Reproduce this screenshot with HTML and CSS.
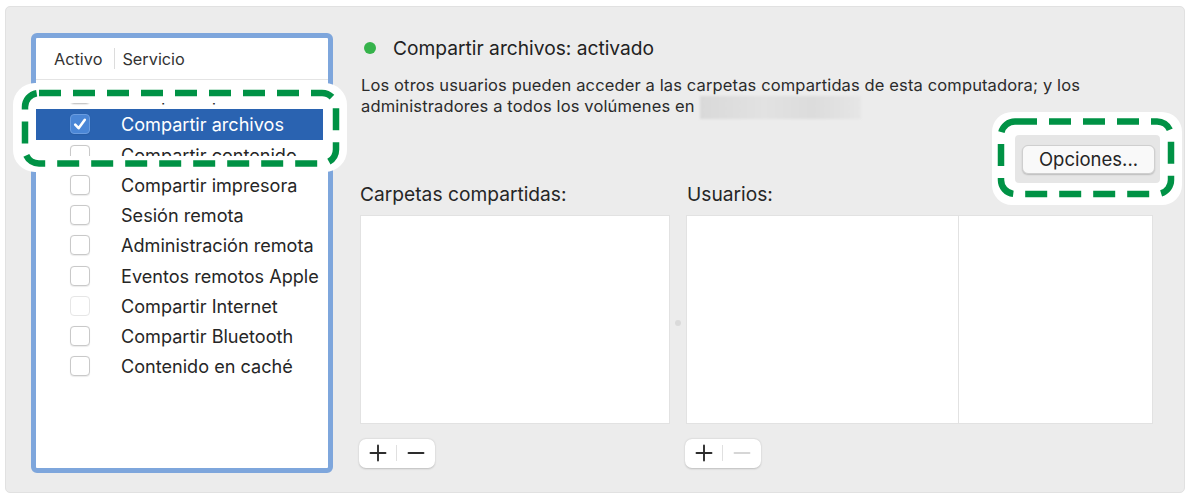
FILE: index.html
```html
<!DOCTYPE html>
<html lang="es">
<head>
<meta charset="utf-8">
<title>Compartir</title>
<link rel="stylesheet" href="styles.css">
</head>
<body>
<div class="page">
  <div class="panel">
    <div class="services">
      <div class="services-head">
        <span class="col-active">Activo</span>
        <span class="col-sep"></span>
        <span class="col-service">Servicio</span>
      </div>
      <div class="services-body">
        <div class="row"><span class="cb"></span><span class="label">Compartir pantalla</span></div>
        <div class="row selected"><span class="cb checked"><svg viewBox="0 0 20 20" width="20" height="20"><path d="M5.2 10.6 L8.6 14.2 L14.8 5.8" fill="none" stroke="#fff" stroke-width="2.6" stroke-linecap="round" stroke-linejoin="round"/></svg></span><span class="label">Compartir archivos</span></div>
        <div class="row"><span class="cb"></span><span class="label">Compartir contenido</span></div>
        <div class="row"><span class="cb"></span><span class="label">Compartir impresora</span></div>
        <div class="row"><span class="cb"></span><span class="label">Sesión remota</span></div>
        <div class="row"><span class="cb"></span><span class="label">Administración remota</span></div>
        <div class="row"><span class="cb"></span><span class="label">Eventos remotos Apple</span></div>
        <div class="row"><span class="cb disabled"></span><span class="label">Compartir Internet</span></div>
        <div class="row"><span class="cb"></span><span class="label">Compartir Bluetooth</span></div>
        <div class="row"><span class="cb"></span><span class="label">Contenido en caché</span></div>
      </div>
    </div>

    <div class="detail">
      <div class="status">
        <span class="dot"></span>
        <span class="status-text">Compartir archivos: activado</span>
      </div>
      <p class="desc">Los otros usuarios pueden acceder a las carpetas compartidas de esta computadora; y los<br>administradores a todos los volúmenes en <span class="redacted"></span></p>
      <div class="options-row">
        <button class="btn">Opciones...</button>
      </div>
      <div class="lists">
        <div class="list-label">Carpetas compartidas:</div>
        <div></div>
        <div class="list-label users-label">Usuarios:</div>

        <div class="box"></div>
        <div class="splitter"><span class="grip"></span></div>
        <div class="box users"><div class="users-col"></div><div></div></div>

        <div class="pm">
          <span class="pm-btn"><svg viewBox="0 0 18 18" width="18" height="18"><path d="M9 1.5 V16.5 M1.5 9 H16.5" stroke="#2d2d2d" stroke-width="1.9" stroke-linecap="round"/></svg></span>
          <span class="pm-sep"></span>
          <span class="pm-btn"><svg viewBox="0 0 18 18" width="18" height="18"><path d="M1.5 9 H16.5" stroke="#2d2d2d" stroke-width="1.9" stroke-linecap="round"/></svg></span>
        </div>
        <div></div>
        <div class="pm">
          <span class="pm-btn"><svg viewBox="0 0 18 18" width="18" height="18"><path d="M9 1.5 V16.5 M1.5 9 H16.5" stroke="#2d2d2d" stroke-width="1.9" stroke-linecap="round"/></svg></span>
          <span class="pm-sep"></span>
          <span class="pm-btn"><svg viewBox="0 0 18 18" width="18" height="18"><path d="M1.5 9 H16.5" stroke="#d6d6d6" stroke-width="1.9" stroke-linecap="round"/></svg></span>
        </div>
      </div>
    </div>
  </div>

  <svg class="callouts" viewBox="0 0 1191 497" width="1191" height="497">
    <path fill="#ffffff" fill-rule="evenodd" d="M35,83 H325 A22 22 0 0 1 347,105 V150 A22 22 0 0 1 325,172 H35 A22 22 0 0 1 13,150 V105 A22 22 0 0 1 35,83 Z M39,103 H325 A3 3 0 0 1 328,106 V153 A3 3 0 0 1 325,156 H39 A3 3 0 0 1 36,153 V106 A3 3 0 0 1 39,103 Z"/>
    <rect x="25" y="93" width="311" height="70.5" rx="14" fill="none" stroke="#009245" stroke-width="6.5" stroke-dasharray="22 12"/>
    <path fill="#ffffff" fill-rule="evenodd" d="M1012,112 H1162 A20 20 0 0 1 1182,132 V185 A20 20 0 0 1 1162,205 H1012 A20 20 0 0 1 992,185 V132 A20 20 0 0 1 1012,112 Z M1019,135 H1156 A4 4 0 0 1 1160,139 V179 A4 4 0 0 1 1156,183 H1019 A4 4 0 0 1 1015,179 V139 A4 4 0 0 1 1019,135 Z"/>
    <rect x="1015" y="135" width="145" height="48" rx="4" fill="#000" fill-opacity="0.025"/>
    <rect x="1001" y="121.5" width="170" height="72.5" rx="14" fill="none" stroke="#009245" stroke-width="6.5" stroke-dasharray="22 12"/>
  </svg>
</div>
</body>
</html>
```

FILE: styles.css
```css
* { box-sizing: border-box; }

html, body {
  margin: 0;
  padding: 0;
  background: #ffffff;
}

body {
  font-family: "Inter", "Liberation Sans", Arial, sans-serif;
  color: #262626;
}

.page {
  position: relative;
  width: 1191px;
  height: 497px;
  padding: 6px 6px 4px 5px;
}

.panel {
  display: flex;
  width: 1180px;
  height: 487px;
  background: #ececec;
  border: 1px solid #e1e1e1;
  border-radius: 5px;
}

/* Services list */
.services {
  flex: none;
  width: 302px;
  height: 440px;
  margin: 26px 0 0 25px;
  border: 5px solid #7ea6dc;
  border-radius: 6px;
  background: #ffffff;
  overflow: hidden;
}

.services-head {
  display: flex;
  align-items: center;
  height: 42px;
  padding-left: 18px;
  border-bottom: 1px solid #e4e4e4;
  font-size: 16.3px;
  color: #333333;
}

.col-sep {
  width: 1px;
  height: 21px;
  background: #dcdcdc;
  margin: 0 7px 0 12px;
}

.services-body {
  margin-top: -1px;
}

.row {
  display: flex;
  align-items: center;
  height: 30.25px;
  margin-right: 5px;
  font-size: 18.1px;
  color: #262626;
}

.row.selected {
  background: #2a63b1;
  color: #ffffff;
}

.cb {
  flex: none;
  width: 20px;
  height: 20px;
  margin-left: 34px;
  margin-right: 31px;
  border: 1px solid #c9c9c9;
  border-radius: 4px;
  background: #ffffff;
  box-shadow: 0 0.5px 1px rgba(0, 0, 0, 0.08);
}

.cb.disabled {
  border-color: #e6e6e6;
  box-shadow: none;
}

.cb.checked {
  background: #4a86d6;
  border-color: #6a9ce0;
}

.cb.checked svg {
  display: block;
  margin: -1px;
}

/* Detail column */
.detail {
  flex: 1;
  display: flex;
  flex-direction: column;
  margin-left: 27px;
  padding: 30px 29px 0 0;
}

.status {
  display: flex;
  align-items: center;
  height: 22px;
}

.dot {
  width: 12px;
  height: 12px;
  margin-left: 4px;
  margin-right: 17px;
  border-radius: 50%;
  background: #36b34b;
}

.status-text {
  font-size: 19.2px;
  color: #222222;
}

.desc {
  margin: 15.5px 0 0 1px;
  font-size: 16.5px;
  letter-spacing: 0.13px;
  line-height: 21px;
  color: #2b2b2b;
  white-space: nowrap;
}

.redacted {
  display: inline-block;
  width: 161px;
  height: 23px;
  margin-left: 1px;
  vertical-align: -7px;
  background: linear-gradient(90deg, #d9d9d9, #e2e2e2 40%, #dcdcdc 70%, #e6e6e6);
  filter: blur(1px);
}

.options-row {
  display: flex;
  justify-content: flex-end;
  margin-top: 26px;
}

.btn {
  width: 133px;
  height: 29px;
  padding: 0;
  border: 0.5px solid #d4d4d4;
  border-radius: 6px;
  background: #ffffff;
  box-shadow: 0 1px 1.5px rgba(0, 0, 0, 0.18);
  font-family: inherit;
  font-size: 18.5px;
  color: #262626;
}

.lists {
  display: grid;
  grid-template-columns: 310px 16px 469px;
  grid-template-rows: 20px 209px 29px;
  row-gap: 11px;
  margin-top: 10px;
}

.list-label {
  font-size: 19.2px;
  line-height: 20px;
  color: #262626;
}

.users-label { margin-left: 1px; }

.box {
  background: #ffffff;
  border: 1px solid #e2e2e2;
}

.users {
  display: grid;
  grid-template-columns: 272px 1fr;
  width: 467px;
}

.users-col {
  border-right: 1px solid #e2e2e2;
}

.splitter {
  display: flex;
  align-items: center;
  justify-content: center;
}

.grip {
  width: 6px;
  height: 6px;
  margin-top: 8px;
  border-radius: 50%;
  background: #dadada;
}

.pm {
  display: flex;
  align-items: center;
  width: 76px;
  height: 29px;
  margin-top: 4px;
  margin-left: -1px;
  background: #ffffff;
  border-radius: 7px;
  box-shadow: 0 0.5px 2px rgba(0, 0, 0, 0.2);
}

.pm-btn {
  display: flex;
  align-items: center;
  justify-content: center;
  width: 37px;
  height: 29px;
}

.pm-btn svg {
  display: block;
}

.pm-sep {
  width: 1px;
  height: 16px;
  background: #e0e0e0;
}

.callouts {
  position: absolute;
  left: 0;
  top: 0;
  pointer-events: none;
}
```
